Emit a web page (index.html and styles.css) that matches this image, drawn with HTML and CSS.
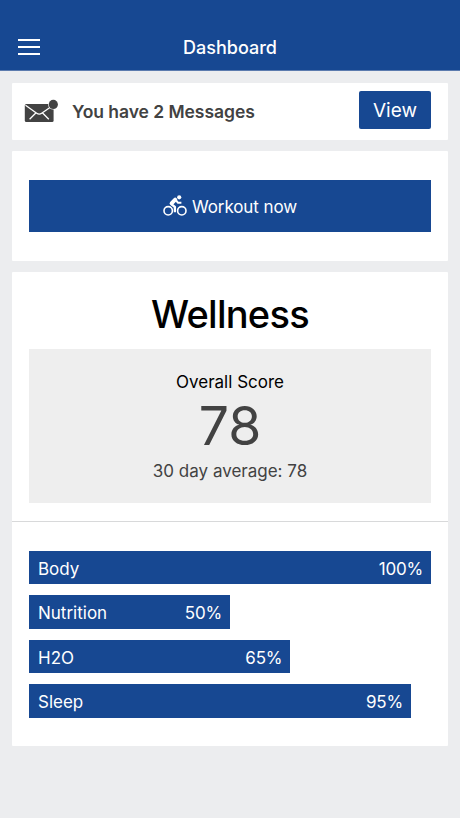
FILE: index.html
```html
<!DOCTYPE html>
<html lang="en">
<head>
<meta charset="utf-8">
<meta name="viewport" content="width=device-width, initial-scale=1">
<title>Dashboard</title>
<link rel="stylesheet" href="styles.css">
</head>
<body>
<header class="topbar">
  <button class="menu" aria-label="Menu"><span></span><span></span><span></span></button>
  <h1 class="title">Dashboard</h1>
</header>
<main class="content">
  <section class="card messages">
    <svg class="mail" viewBox="0 0 34 24" aria-hidden="true">
      <rect x="0.8" y="5" width="28.8" height="18" rx="1.5" fill="#424242"/>
      <path d="M1.5 6.2 12.7 14.2Q15.2 16 17.7 14.2L27 7.7M5.6 20.3 11.8 14M24.8 20.3 18.6 14" fill="none" stroke="#fff" stroke-width="1.3"/>
      <circle cx="29.3" cy="5.4" r="5.2" fill="#fff"/>
      <circle cx="29.3" cy="5.4" r="4.6" fill="#424242"/>
    </svg>
    <span class="messages-text">You have 2 Messages</span>
    <button class="view">View</button>
  </section>
  <section class="card workout">
    <button class="workout-button">
      <svg class="bike" viewBox="0 0 24 22" aria-hidden="true">
        <g fill="none" stroke="#fff">
          <circle cx="5.2" cy="15.8" r="4.2" stroke-width="1.6"/>
          <circle cx="18.8" cy="15.8" r="4.2" stroke-width="1.6"/>
          <path d="M12.2 4.6 8.6 8.3" stroke-width="4" stroke-linecap="round"/>
          <path d="M8.6 9.3 11.9 12V17.2" stroke-width="2.3" stroke-linejoin="round"/>
          <path d="M12.9 5 14.8 7.7H18.4" stroke-width="2" stroke-linejoin="round"/>
        </g>
        <circle cx="16.2" cy="2.3" r="2.1" fill="#fff"/>
      </svg>
      <span class="workout-label">Workout now</span>
    </button>
  </section>
  <section class="card wellness">
    <h2 class="heading">Wellness</h2>
    <div class="score">
      <div class="score-label">Overall Score</div>
      <div class="score-value">78</div>
      <div class="score-average">30 day average: 78</div>
    </div>
    <div class="bars">
      <div class="bar" style="width:100%"><span>Body</span><span class="percent">100%</span></div>
      <div class="bar" style="width:50%"><span>Nutrition</span><span class="percent">50%</span></div>
      <div class="bar" style="width:65%"><span>H2O</span><span class="percent">65%</span></div>
      <div class="bar" style="width:95%"><span>Sleep</span><span class="percent">95%</span></div>
    </div>
  </section>
</main>
</body>
</html>
```
FILE: styles.css
```css
* { box-sizing: border-box; }
body {
  margin: 0;
  min-height: 818px;
  background: #ecedef;
  color: #424242;
  font-family: Inter, "Liberation Sans", sans-serif;
  font-size: 17px;
}
button {
  border: 0;
  padding: 0;
  background: #174892;
  color: #fff;
  font: inherit;
}
.topbar {
  display: grid;
  grid-template-columns: 47px 1fr 47px;
  align-items: center;
  height: 71px;
  padding-top: 23px;
  background: #174892;
  border-bottom: 1px solid #5c7bae;
}
.menu {
  display: flex;
  flex-direction: column;
  gap: 5px;
  width: 22px;
  margin-left: 18px;
}
.menu span { height: 2px; background: #fff; }
.title {
  margin: 0;
  padding-top: 2px;
  color: #fff;
  font-size: 18px;
  font-weight: 500;
  line-height: 24px;
  text-align: center;
}
.content {
  display: flex;
  flex-direction: column;
  gap: 11px;
  padding: 12px 12px 0;
}
.card { background: #fff; border-radius: 1px; }
.messages {
  display: flex;
  align-items: center;
  height: 57px;
  padding: 0 17px 0 12px;
}
.mail { width: 34px; height: 24px; margin-bottom: 1px; }
.messages-text {
  flex: 1;
  margin-left: 14px;
  font-size: 17.5px;
  font-weight: 600;
  letter-spacing: -0.05px;
}
.view {
  width: 72px;
  height: 38px;
  margin-bottom: 3px;
  border-radius: 2px;
  font-size: 19px;
}
.workout { height: 110px; padding: 29px 17px; }
.workout-button {
  display: flex;
  align-items: center;
  justify-content: center;
  gap: 5px;
  width: 100%;
  height: 52px;
}
.workout-label { padding-top: 2px; letter-spacing: -0.1px; }
.bike { width: 24px; height: 22px; }
.wellness { height: 474px; }
.heading {
  margin: 0;
  height: 77px;
  padding-top: 18px;
  color: #000;
  font-size: 38px;
  font-weight: 500;
  letter-spacing: -0.75px;
  line-height: 48px;
  text-align: center;
}
.score {
  height: 154px;
  margin: 0 17px;
  padding-top: 21px;
  background: #eee;
  text-align: center;
}
.score-label { color: #000; line-height: 24px; }
.score-value { font-size: 53.5px; line-height: 64px; }
.score-average { line-height: 26px; }
.bars {
  display: flex;
  flex-direction: column;
  gap: 11.3px;
  margin-top: 18px;
  padding: 29px 17px 0;
  border-top: 1px solid #d8d9da;
}
.bar {
  display: flex;
  align-items: center;
  justify-content: space-between;
  height: 33.2px;
  padding: 2px 9px 0;
  background: #174892;
  color: #fff;
}
.percent { margin-right: -1px; letter-spacing: -0.2px; }
```
